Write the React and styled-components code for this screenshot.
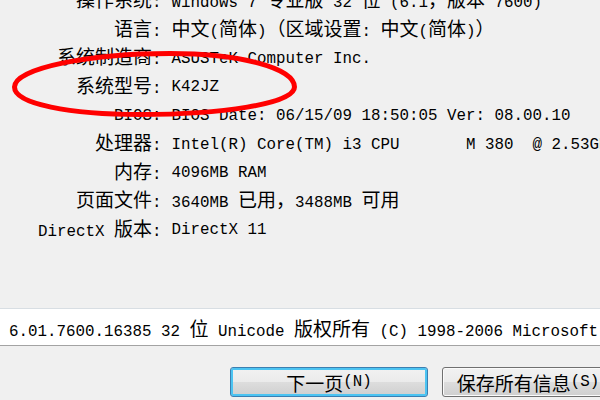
import React from 'react'
import styled, { createGlobalStyle } from 'styled-components'

const GlobalStyle = createGlobalStyle`
body {
  margin: 0;
  background: #f0f0f0;
}
`

const Page = styled.div`
position: relative;
width: 600px;
height: 400px;
overflow: hidden;
background: #f0f0f0;
color: #000;
display: flex;
flex-direction: column;
`

const InfoGrid = styled.div`
display: grid;
grid-template-columns: 161.5px 1fr;
column-gap: 10px;
grid-auto-rows: 28.6px;
align-items: center;
margin-top: -12.8px;
`

const Label = styled.div`
text-align: right;
white-space: pre;
line-height: 28.6px;
`

const Value = styled.div`
white-space: pre;
line-height: 28.6px;
`

const Latin = styled.span`
font-family: "Liberation Mono", "DejaVu Sans Mono", monospace;
font-size: 15.83px;
`

const Han = styled.span`
font-family: "Noto Sans CJK SC", "Noto Sans", sans-serif;
font-size: 19px;
`

const StatusBar = styled.div`
margin-top: 63.5px;
height: 36px;
background: #ffffff;
border-top: 1px solid #d8dee3;
border-bottom: 1px solid #a3a3a3;
display: flex;
align-items: center;
overflow: hidden;
white-space: pre;
`

const StatusText = styled.div`
margin-left: -57.5px;
`

const ButtonRow = styled.div`
display: flex;
gap: 14px;
margin-top: 21px;
padding-left: 230px;
`

const Button = styled.div`
flex: none;
box-sizing: border-box;
width: ${p => p.$width}px;
height: 30px;
border-radius: 3px;
border: 1px solid ${p => (p.$focused ? '#3c7fb1' : '#707070')};
box-shadow: inset 0 0 0 ${p => (p.$focused ? '2px #4cc4f2' : '1px #fbfbfb')};
background: linear-gradient(#f2f2f2 0%, #ebebeb 50%, #dddddd 51%, #cfcfcf 100%);
display: flex;
align-items: center;
justify-content: center;
white-space: pre;
`

const Overlay = styled.svg`
position: absolute;
left: 0;
top: 0;
pointer-events: none;
`

const isWide = ch => ch.charCodeAt(0) > 0x2e7f

const Mixed = ({ text }) => {
    const runs = []
    for (const ch of text) {
        const wide = isWide(ch)
        const last = runs[runs.length - 1]
        if (last && last.wide === wide) last.text += ch
        else runs.push({ wide, text: ch })
    }
    return runs.map((r, i) =>
        r.wide ? <Han key={i}>{r.text}</Han> : <Latin key={i}>{r.text}</Latin>
    )
}

const rows = [
    ['操作系统:', 'Windows 7 专业版 32 位 (6.1，版本 7600)'],
    ['语言:', '中文(简体)（区域设置: 中文(简体)）'],
    ['系统制造商:', 'ASUSTeK Computer Inc.'],
    ['系统型号:', 'K42JZ'],
    ['BIOS:', 'BIOS Date: 06/15/09 18:50:05 Ver: 08.00.10'],
    ['处理器:', 'Intel(R) Core(TM) i3 CPU       M 380  @ 2.53GHz'],
    ['内存:', '4096MB RAM'],
    ['页面文件:', '3640MB 已用，3488MB 可用'],
    ['DirectX 版本:', 'DirectX 11'],
]

const App = () => {
    return (
        <Page>
            <GlobalStyle />
            <InfoGrid>
                {rows.map(([label, value]) => (
                    <React.Fragment key={label}>
                        <Label><Mixed text={label} /></Label>
                        <Value><Mixed text={value} /></Value>
                    </React.Fragment>
                ))}
            </InfoGrid>
            <StatusBar>
                <StatusText>
                    <Mixed text="DxDiag 6.01.7600.16385 32 位 Unicode 版权所有 (C) 1998-2006 Microsoft Corporation" />
                </StatusText>
            </StatusBar>
            <ButtonRow>
                <Button $width={198} $focused><Mixed text="下一页(N)" /></Button>
                <Button $width={172}><Mixed text="保存所有信息(S)" /></Button>
            </ButtonRow>
            <Overlay width="600" height="400" viewBox="0 0 600 400">
                <path
                    d="M 14.5 87 C 14.5 68, 90 53.5, 170 53.5 C 240 53.5, 294.5 68, 294.5 87 C 294.5 104, 220 114.5, 140 114.5 C 70 114.5, 14.5 104, 14.5 87 Z"
                    fill="none"
                    stroke="#ff0000"
                    strokeWidth="5"
                />
            </Overlay>
        </Page>
    )
}

export default App
